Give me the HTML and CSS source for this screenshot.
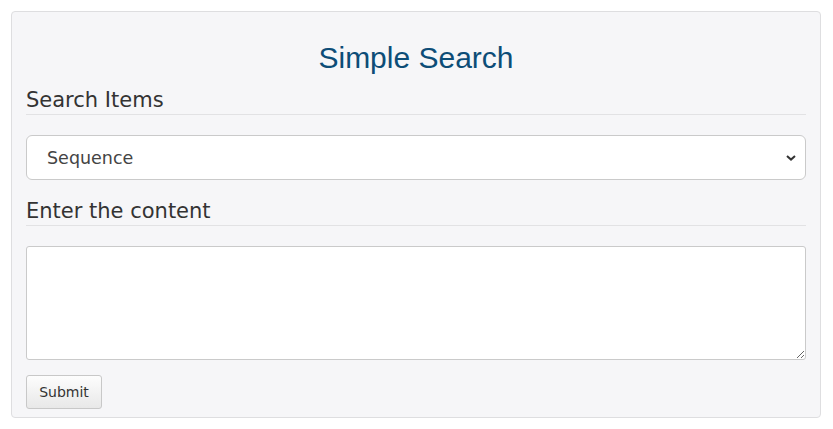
FILE: index.html
```html
<!DOCTYPE html>
<html>
<head>
<meta charset="utf-8">
<link rel="stylesheet" href="styles.css">
</head>
<body>
<div class="card">
  <h1 class="title">Simple Search</h1>
  <h2 class="section">Search Items</h2>
  <div class="select-wrap">
    <select class="select">
      <option>Sequence</option>
    </select>
    <svg class="chev" width="10" height="6" viewBox="0 0 10 6"><path d="M1 1 L5 4.6 L9 1" fill="none" stroke="#333" stroke-width="2"/></svg>
  </div>
  <h2 class="section section-gap">Enter the content</h2>
  <textarea class="area"></textarea>
  <div class="actions">
    <button class="btn">Submit</button>
  </div>
</div>
</body>
</html>
```
FILE: styles.css
```css
html, body {
  margin: 0;
  padding: 0;
  background: #fff;
}
body {
  padding: 11px 12px 0 11px;
  font-family: "DejaVu Sans", Verdana, sans-serif;
}
.card {
  background: #f6f6f8;
  border: 1px solid #dedee0;
  border-radius: 4px;
  padding: 29px 14px 9px 14px;
  height: 407px;
  box-sizing: border-box;
}
.title {
  margin: 0;
  text-align: center;
  font-family: "Liberation Sans", Arial, sans-serif;
  font-weight: normal;
  font-size: 30px;
  color: #0d4d77;
  line-height: 34px;
}
.section {
  margin: 13px 0 20px 0;
  font-weight: normal;
  font-size: 21px;
  line-height: 24px;
  color: #333;
  padding-bottom: 2px;
  border-bottom: 1px solid #e2e2e4;
}
.section-gap {
  margin-top: 19px;
}
.select-wrap {
  position: relative;
}
.select {
  display: block;
  width: 100%;
  height: 45px;
  box-sizing: border-box;
  appearance: none;
  -webkit-appearance: none;
  background: #fff;
  border: 1px solid #cacaca;
  border-radius: 6px;
  padding: 0 0 0 20px;
  font-family: "DejaVu Sans", Verdana, sans-serif;
  font-size: 17.5px;
  color: #444;
  outline: none;
}
.chev {
  position: absolute;
  right: 10px;
  top: 20px;
}
.area {
  display: block;
  width: 100%;
  height: 114px;
  box-sizing: border-box;
  border: 1px solid #cacaca;
  border-radius: 3px;
  background: #fff;
  margin: 0;
  resize: vertical;
  outline: none;
}
.actions {
  margin-top: 15px;
}
.btn {
  height: 34px;
  width: 76px;
  box-sizing: border-box;
  border: 1px solid #c8c8c8;
  border-radius: 3px;
  background: linear-gradient(#fdfdfd, #e8e8e8);
  font-family: "DejaVu Sans", Verdana, sans-serif;
  font-size: 14px;
  color: #333;
  padding: 0;
}
```
